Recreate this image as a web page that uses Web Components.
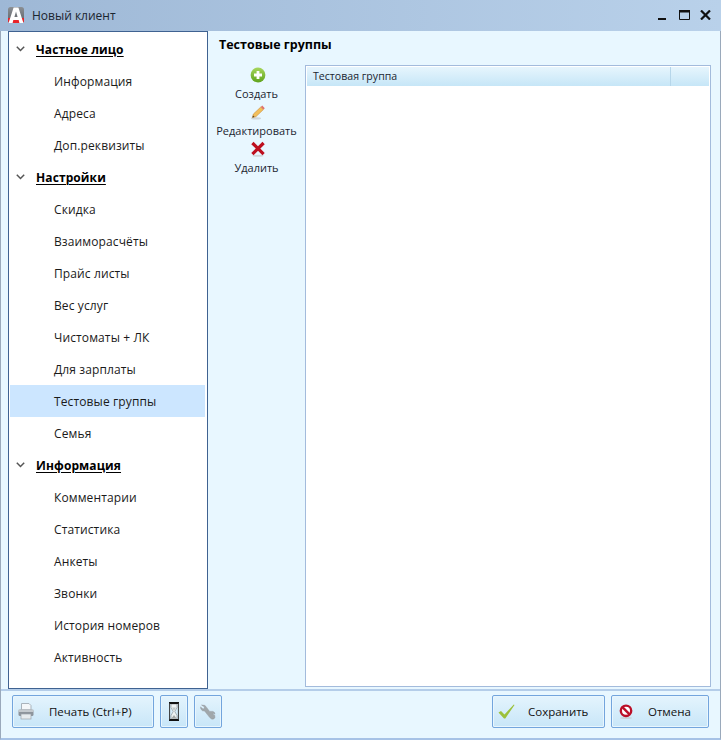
<!DOCTYPE html>
<html><head><meta charset="utf-8"><style>
html,body{margin:0;padding:0;background:#fff}
body{width:721px;height:740px;overflow:hidden;font:12px "Open Sans","Noto Sans",sans-serif;color:#111}
</style></head><body>
<app-window></app-window>
<script>
const cls=(name,html)=>customElements.define(name,class extends HTMLElement{constructor(){super();this.attachShadow({mode:'open'}).innerHTML=html;}});
const FONT='"Open Sans","Noto Sans",sans-serif';
cls('title-bar',`<style>
:host{display:flex;align-items:center;height:31px;background:linear-gradient(90deg,#9eb8d6,#b9d1ea);box-sizing:border-box;padding:0 0 0 8px;color:#1b2530}
.t{margin-left:8px;font:12px ${FONT}}
.logo{width:16px;height:16px;margin-top:-1px}
.ctl{margin-left:auto;display:flex;padding-right:10px;align-items:center;margin-top:-1px}
svg{display:block}
</style>
<svg class="logo" viewBox="0 0 16 16"><defs><linearGradient id="g" x1="0" y1="0" x2="0" y2="1"><stop offset="0" stop-color="#8b8f94"/><stop offset="1" stop-color="#5c6066"/></linearGradient></defs><rect width="16" height="16" rx="2.5" fill="url(#g)"/><path d="M0 11 H16 V13.5 Q16 16 13.5 16 H2.5 Q0 16 0 13.5Z" fill="#e8232a"/><path d="M5.6 .5 H10.4 L15.4 16 H11.4 L10.7 13 H5.3 L4.6 16 H.6Z M6.4 10 H9.6 L8 4.6Z" fill="#fff" fill-rule="evenodd"/></svg>
<div class="t">Новый клиент</div>
<div class="ctl">
<svg width="8" height="10" viewBox="0 0 8 10"><rect x="0" y="8" width="8" height="2" fill="#111"/></svg>
<svg style="margin-left:13px" width="11" height="10" viewBox="0 0 11 10"><path d="M.5 .5H10.5V9.5H.5Z" fill="none" stroke="#111"/><rect width="11" height="2.5" fill="#111"/></svg>
<svg style="margin-left:10px" width="11" height="10" viewBox="0 0 11 10"><path d="M1 .5L10 9.5M10 .5L1 9.5" stroke="#111" stroke-width="2.2"/></svg>
</div>`);
cls('nav-group',`<style>
:host{display:flex;align-items:center;height:32px;font:700 12px ${FONT};letter-spacing:.1px;color:#000}
svg{margin-left:6px;width:9px;height:6px;flex:none}
span{margin-left:11px;text-decoration:underline;text-underline-offset:2px;text-decoration-thickness:1px}
</style><svg viewBox="0 0 9 6"><path d="M.8 .8L4.5 4.5L8.2 .8" fill="none" stroke="#555" stroke-width="1.5"/></svg><span><slot></slot></span>`);
cls('nav-item',`<style>
:host{display:flex;align-items:center;height:32px;padding-left:44px;font:12px ${FONT};letter-spacing:.12px;color:#1a1a1a}
:host([selected]){background:#cce6ff}
</style><slot></slot>`);
cls('nav-tree',`<style>
:host{display:flex;flex-direction:column;width:200px;box-sizing:border-box;border:1px solid #3f6291;background:#fff;padding:1px 2px 0 1px;flex:none}
</style><slot></slot>`);
cls('side-action',`<style>
:host{display:flex;flex-direction:column;align-items:center;height:37px;font:11px ${FONT};color:#1b2530;line-height:15px;white-space:nowrap}
.i{height:19px;display:flex;align-items:center;justify-content:center}
.l{padding-top:2px;margin-left:-2px}
</style><div class="i"><slot name="icon"></slot></div><div class="l"><slot></slot></div>`);
cls('data-grid',`<style>
:host{display:flex;flex-direction:column;flex:1;box-sizing:border-box;border:1px solid #a3bbdc;background:#fff;padding:1px;margin-right:9px;min-width:0}
.h{display:flex;height:19px;background:linear-gradient(#e6f5fd,#c6e6f7);font:10.6px ${FONT};color:#1b2530}
.c{flex:1;padding-left:6px;line-height:19px}
.e{width:38px;border-left:1px solid #b6d6ea}
</style><div class="h"><div class="c"><slot></slot></div><div class="e"></div></div>`);
cls('app-button',`<style>
:host{display:flex;align-items:center;box-sizing:border-box;height:33px;flex:none;border:1px solid #73a5dd;border-radius:2px;background:linear-gradient(#e4f4fd,#c8e6f8);font:11.5px ${FONT};color:#111;box-shadow:inset 0 0 0 1px #e8f6fe}
:host([icononly]){justify-content:center;width:28px}
</style><slot name="icon"></slot><slot></slot>`);
cls('app-window',`<style>
:host{display:flex;flex-direction:column;width:721px;height:740px;box-sizing:border-box;background:#e8f7ff;border-left:1px solid #9aa9bb;border-right:1px solid #9aa9bb;border-bottom:2px solid #a6c2e6}
title-bar{margin:0 -1px}
.main{display:flex;height:658px;padding:0 0 0 7px;flex:none}
.right{flex:1;display:flex;flex-direction:column;min-width:0}
h1{margin:0;height:34px;padding:5px 0 0 11px;box-sizing:border-box;font:700 12.5px ${FONT};color:#000;line-height:18px}
.body{flex:1;display:flex;min-height:0;padding-bottom:2px}
.actions{width:97px;box-sizing:border-box;flex:none;display:flex;flex-direction:column;padding-left:2px}
.foot{flex:1;border-top:2px solid #b4cde9;display:flex;align-items:flex-start;padding:4px 11px 0 11px;gap:6px;box-sizing:border-box}
.sp{flex:1}
.pr{width:142px}
.sv{width:113px}.cn{width:98px}
svg{flex:none;display:block}
</style>
<title-bar></title-bar>
<div class="main">
<nav-tree>
<nav-group>Частное лицо</nav-group>
<nav-item>Информация</nav-item><nav-item>Адреса</nav-item><nav-item>Доп.реквизиты</nav-item>
<nav-group>Настройки</nav-group>
<nav-item>Скидка</nav-item><nav-item>Взаиморасчёты</nav-item><nav-item>Прайс листы</nav-item><nav-item>Вес услуг</nav-item><nav-item>Чистоматы + ЛК</nav-item><nav-item>Для зарплаты</nav-item><nav-item selected>Тестовые группы</nav-item><nav-item>Семья</nav-item>
<nav-group>Информация</nav-group>
<nav-item>Комментарии</nav-item><nav-item>Статистика</nav-item><nav-item>Анкеты</nav-item><nav-item>Звонки</nav-item><nav-item>История номеров</nav-item><nav-item>Активность</nav-item>
</nav-tree>
<div class="right">
<h1>Тестовые группы</h1>
<div class="body">
<div class="actions">
<side-action><svg slot="icon" width="16" height="16" viewBox="0 0 16 16"><defs><linearGradient id="gp" x1="0" y1="0" x2="0" y2="1"><stop offset="0" stop-color="#a6d65c"/><stop offset="1" stop-color="#5fa31c"/></linearGradient></defs><circle cx="8" cy="8" r="7.4" fill="url(#gp)"/><path d="M8 4V12M4 8H12" stroke="#fff" stroke-width="2.8"/></svg>Создать</side-action>
<side-action><svg slot="icon" width="16" height="16" viewBox="0 0 16 16"><ellipse cx="6" cy="14.4" rx="5" ry="1.1" fill="#cfd6da"/><path d="M2.4 13.6L3.4 10L10.8 3L13.4 5.5L6 12.6Z" fill="#f2bf5a" stroke="#c98a30" stroke-width=".6"/><path d="M10.8 3L12.2 1.6L14.8 4.2L13.4 5.5Z" fill="#e0736c"/><path d="M2.4 13.6L3 11.5L4.6 13Z" fill="#4a3a28"/></svg>Редактировать</side-action>
<side-action><svg slot="icon" width="16" height="16" viewBox="0 0 16 16"><ellipse cx="8" cy="14.8" rx="5.5" ry="1" fill="#cfd6da"/><path d="M2.4 2L13.6 13.2M13.6 2L2.4 13.2" stroke="#bd0f1e" stroke-width="3.2"/></svg>Удалить</side-action>
</div>
<data-grid>Тестовая группа</data-grid>
</div>
</div>
</div>
<div class="foot">
<app-button class="pr"><svg slot="icon" style="margin-left:5px" width="16" height="17" viewBox="0 0 16 17"><path d="M3.5 .5H11L13 2.5V7H3.5Z" fill="#f4f7f9" stroke="#a9b3bb"/><rect x=".5" y="6.5" width="15" height="6.5" rx="1.5" fill="#8d949b"/><rect x=".5" y="6.5" width="15" height="2.5" fill="#c3c9ce"/><rect x="3" y="11" width="10" height="5" fill="#e6ebee" stroke="#9aa3aa" stroke-width=".7"/></svg><span style="margin-left:15px">Печать (Ctrl+P)</span></app-button>
<app-button icononly><svg slot="icon" width="12" height="19" viewBox="0 0 12 19"><path d="M3 2H9V5.5L6.8 9.5L9 13.5V17H3V13.5L5.2 9.5L3 5.5Z" fill="#eef3f4" stroke="#8f979b" stroke-width=".7"/><path d="M4 5.5H8L6 9Z" fill="#c2c8c8"/><path d="M3.4 16.6L6 13L8.6 16.6Z" fill="#a3a8a6"/><path d="M1 1H11M1 18H11" stroke="#111" stroke-width="1.8"/><path d="M1.6 1V18M10.4 1V18" fill="none" stroke="#333" stroke-width="1"/></svg></app-button>
<app-button icononly><svg slot="icon" width="16" height="16" viewBox="0 0 16 16"><path d="M1.5 1L4.5 3L4 5L2.2 4.6L.6 2.8Q.2 5.6 2.4 6.7L4.6 7.1L9.8 13.6Q11.6 15.8 13.6 15Q15.6 13.8 14.8 11.4L13 10.2L13.4 9.2L15 10.2Q15 8 13 7.4L9.6 7.4L6.6 3.4Q5.6 .6 1.5 1Z" fill="#a0a7ab" stroke="#8a9095" stroke-width=".4"/></svg></app-button>
<div class="sp"></div>
<app-button class="sv" style="width:113px"><svg slot="icon" style="margin-left:5px" width="17" height="17" viewBox="0 0 17 17"><path d="M.5 9.5L3 8L6.5 11.5L15.8 1.5L16.5 2L7.3 15.5H6Z" fill="#9cc13b"/></svg><span style="margin-left:13px">Сохранить</span></app-button>
<app-button class="cn"><svg slot="icon" style="margin-left:7px" width="14" height="15" viewBox="0 0 14 15"><ellipse cx="7" cy="14" rx="6" ry="1" fill="#c9d2d8"/><circle cx="7" cy="6.8" r="5.2" fill="#fff" stroke="#bb0f28" stroke-width="2.4"/><path d="M3.4 3.2L10.6 10.4" stroke="#bb0f28" stroke-width="2.4"/></svg><span style="margin-left:15px">Отмена</span></app-button>
</div>`);
</script>
</body></html>
